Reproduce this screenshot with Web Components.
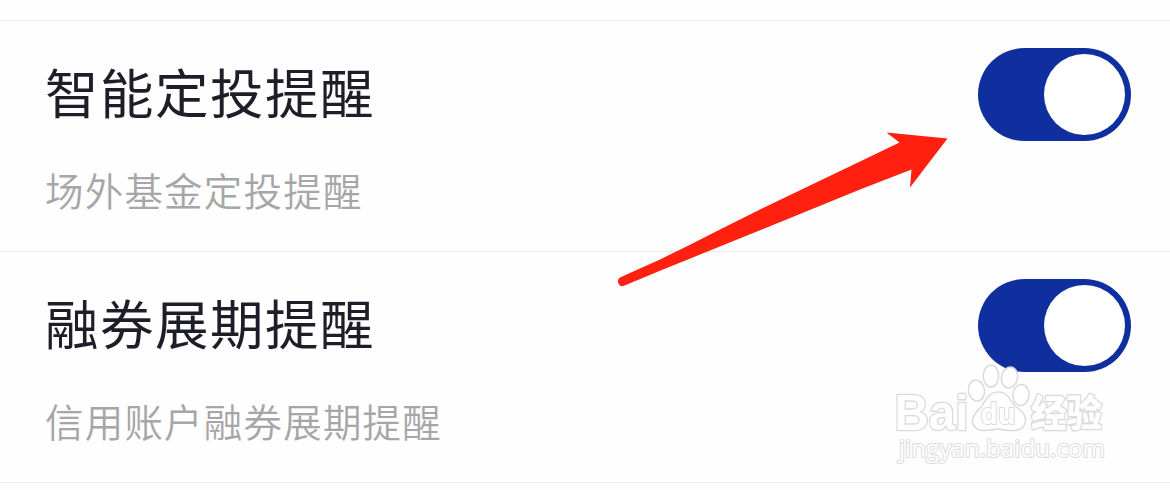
<!DOCTYPE html>
<html lang="zh-CN">
<head>
<meta charset="utf-8">
<title>提醒设置</title>
<style>
  body {
    margin: 0;
    background: #fefefe;
    font-family: "Noto Sans CJK SC", sans-serif;
  }
</style>
</head>
<body>
<reminder-page>
  <reminder-row>
    智能定投提醒
    <span slot="note">场外基金定投提醒</span>
    <toggle-switch slot="control" checked></toggle-switch>
  </reminder-row>
  <reminder-row>
    融券展期提醒
    <span slot="note">信用账户融券展期提醒</span>
    <toggle-switch slot="control" checked></toggle-switch>
  </reminder-row>
  <pointer-arrow slot="overlay"></pointer-arrow>
  <site-watermark slot="overlay"></site-watermark>
</reminder-page>

<script>
class ReminderPage extends HTMLElement {
  constructor() {
    super()
    this.attachShadow({ mode: 'open' })
    this.shadowRoot.innerHTML = `
      <style>
        :host { display: block; position: relative; box-sizing: border-box; height: 490px; padding-top: 20px; overflow: hidden }
        main { border-top: 1px solid #e9e9ea }
      </style>
      <main><slot></slot></main>
      <slot name="overlay"></slot>
    `
  }
}

class ReminderRow extends HTMLElement {
  constructor() {
    super()
    this.attachShadow({ mode: 'open' })
    this.shadowRoot.innerHTML = `
      <style>
        :host {
          display: flex;
          justify-content: space-between;
          align-items: flex-start;
          box-sizing: border-box;
          height: 231px;
          padding: 27px 39px 0 45px;
          border-bottom: 1px solid #e9e9ea;
        }
        .title { font-size: 53.5px; line-height: 85px; letter-spacing: 1.5px; color: #1e1e29 }
        .note { margin-top: 26px; font-size: 38.5px; line-height: 60px; letter-spacing: 1.2px; color: #a6a6a8; font-weight: 350 }
      </style>
      <div>
        <div class="title"><slot></slot></div>
        <div class="note"><slot name="note"></slot></div>
      </div>
      <slot name="control"></slot>
    `
  }
}

class ToggleSwitch extends HTMLElement {
  constructor() {
    super()
    this.attachShadow({ mode: 'open' })
    this.shadowRoot.innerHTML = `
      <style>
        :host { display: flex; box-sizing: border-box; width: 153px; height: 93px; padding: 6px; border-radius: 47px; background: #d5d5d8 }
        :host([checked]) { justify-content: flex-end; background: #102f9e }
        .knob { width: 81px; height: 81px; border-radius: 50%; background: #fff }
      </style>
      <div class="knob"></div>
    `
  }
}

class PointerArrow extends HTMLElement {
  constructor() {
    super()
    this.attachShadow({ mode: 'open' })
    this.shadowRoot.innerHTML = `
      <style>
        :host { display: block; position: absolute; left: 610px; top: 120px; pointer-events: none }
        svg { display: block }
      </style>
      <svg width="350" height="180" viewBox="610 120 350 180">
        <path fill="#ff2010" d="M620.5 277.3 L660 259.4 L690 244.8 L720 229.4 L760 209.5 L860 161.5 L899.5 142.5 L886.5 132.5 L947.5 138.5 L910 187.5 L911.5 169.5 L860 189.5 L760 230.3 L710 250.5 L660 270.8 L624 285.8 C618.5 288 615.5 279.5 620.5 277.3 Z"/>
      </svg>
    `
  }
}

class SiteWatermark extends HTMLElement {
  constructor() {
    super()
    this.attachShadow({ mode: 'open' })
    this.shadowRoot.innerHTML = `
      <style>
        :host { display: block; position: absolute; left: 890px; top: 360px; pointer-events: none }
        svg { display: block; overflow: visible }
        g { fill: #fff; stroke: #dadada; stroke-width: 1.5; stroke-linejoin: round }
        text { font-family: "Open Sans", sans-serif; font-weight: bold; paint-order: stroke }
        .brand { font-family: "Liberation Sans", sans-serif }
        .cjk { font-family: "Noto Sans CJK SC", sans-serif; font-weight: 900 }
        .url { font-weight: 500 }
      </style>
      <svg width="230" height="110" viewBox="890 360 230 110">
        <g>
          <text class="brand" x="894.5" y="429.5" font-size="50" textLength="74" lengthAdjust="spacingAndGlyphs" stroke-width="2.6">Bai</text>
          <ellipse cx="976.5" cy="390.5" rx="8" ry="10.5" transform="rotate(-8 976.5 390.5)"/>
          <ellipse cx="991" cy="376" rx="7.7" ry="11"/>
          <ellipse cx="1009.5" cy="377.5" rx="8" ry="10.5" transform="rotate(12 1009.5 377.5)"/>
          <ellipse cx="1021" cy="395" rx="8" ry="10.5" transform="rotate(5 1021 395)"/>
          <path d="M998 392 C1007 391 1010 400 1015 406 C1021 411 1026 414 1025.5 421 C1024 433 1012 431 998 429 C986 431 975 433 972.5 422 C972 414 979 411 983 404 C988 397 990 392 998 392 Z"/>
          <text x="980.5" y="424" font-size="28" textLength="35" lengthAdjust="spacingAndGlyphs" font-weight="500" stroke-width="2">du</text>
          <text class="cjk" x="1031" y="427" font-size="37" textLength="71" lengthAdjust="spacingAndGlyphs" stroke-width="2.6">经验</text>
          <text class="url" x="899" y="457" font-size="24" textLength="206" lengthAdjust="spacingAndGlyphs" stroke="#dedede" stroke-width="2.2">jingyan.baidu.com</text>
        </g>
      </svg>
    `
  }
}

customElements.define('reminder-page', ReminderPage)
customElements.define('reminder-row', ReminderRow)
customElements.define('toggle-switch', ToggleSwitch)
customElements.define('pointer-arrow', PointerArrow)
customElements.define('site-watermark', SiteWatermark)
</script>
</body>
</html>
